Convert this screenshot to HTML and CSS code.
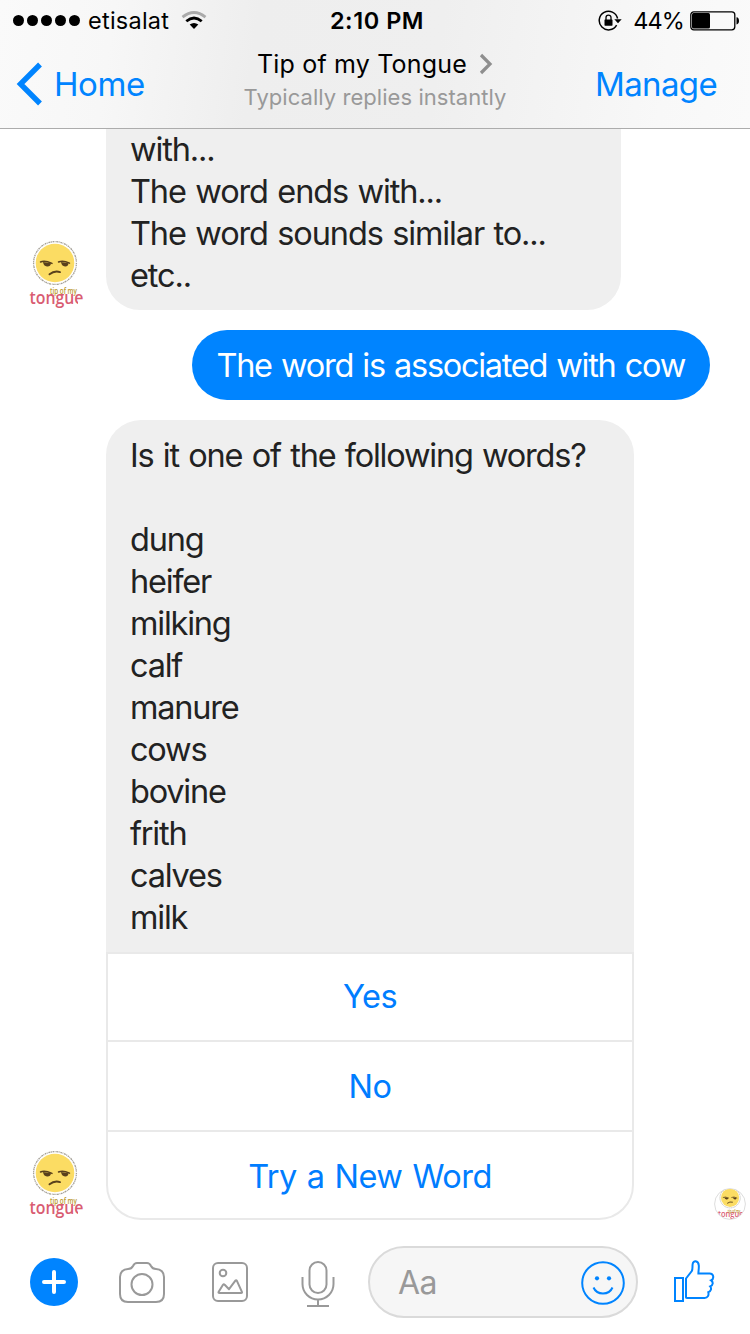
FILE: index.html
```html
<!DOCTYPE html>
<html lang="en">
<head>
<meta charset="utf-8">
<title>Tip of my Tongue</title>
<link rel="stylesheet" href="styles.css">
</head>
<body>
<svg class="defs" width="0" height="0" aria-hidden="true">
  <defs>
    <clipPath id="seenClip"><circle cx="16" cy="17" r="15"/></clipPath>
    <symbol id="logo" viewBox="0 0 60 72">
      <circle cx="27" cy="25" r="21.400" fill="none" stroke="#756f61" stroke-width="1.300" stroke-dasharray="1 .7 1.600 .6 .8 .8 2 .5" stroke-opacity=".65"/>
      <circle cx="27" cy="25" r="19.300" fill="#fbdc63"/>
      <g fill="none" stroke="#59401c" stroke-linecap="round">
        <path d="M12.500 24q4-2.200 11.500 1.400M30.500 24q4.500-2.200 11 1.200" stroke-width="1.500"/>
        <path d="M21.500 36.300q5-4 10.500-2.200" stroke-width="1.900"/>
      </g>
      <path d="M15 24l8 1.300q-.5 3.500-4 3.200-3.500-.3-4-4.500zM33 24l7.500 1.200q-.5 3.500-3.500 3.200-3.500-.3-4-4.400z" fill="#59401c"/>
      <text class="logo-big" x="1.500" y="65.500" textLength="54" lengthAdjust="spacingAndGlyphs">tongue</text>
      <text class="logo-small" x="22" y="56.200" textLength="27" lengthAdjust="spacingAndGlyphs">tip of my</text>
      <path d="M50 62.300h8v6h-8z" fill="#fff"/>
    </symbol>
  </defs>
</svg>
<div class="screen">
  <header class="header">
    <div class="status">
      <div class="status-left">
        <span class="dots"><i></i><i></i><i></i><i></i><i></i></span>
        <span class="carrier">etisalat</span>
        <svg class="wifi" width="26" height="20" viewBox="0 0 26 20" fill="none">
          <path d="M1.500 6.200Q13-3.200 24.500 6.200" stroke="#aaa" stroke-width="2.800"/>
          <path d="M5.300 10.300Q13 3.800 20.700 10.300" stroke="#000" stroke-width="2.800"/>
          <path d="M8.700 13.600Q13 10.200 17.300 13.600L13 18z" fill="#000"/>
        </svg>
      </div>
      <div class="clock">2:10 PM</div>
      <div class="status-right">
        <svg class="lock" width="24" height="22" viewBox="0 0 24 22">
          <path d="M18.600 15.200A9.300 9.300 0 1 1 19.600 8.500" fill="none" stroke="#000" stroke-width="1.500"/>
          <path d="M16.300 9.200h7.400l-3.700 4z"/>
          <rect x="6.500" y="9.500" width="8" height="6.200" rx=".6"/>
          <path d="M8 10V7.600a2.500 2.500 0 0 1 5 0V10" fill="none" stroke="#000" stroke-width="1.300"/>
        </svg>
        <span class="percent">44%</span>
        <svg class="battery" width="50" height="20" viewBox="0 0 50 20">
          <rect x=".8" y=".8" width="44" height="18" rx="3" fill="none" stroke="#000" stroke-width="1.300"/>
          <rect x="2" y="2" width="18" height="15.600" rx="1.500"/>
          <path d="M46.500 6.200q2.500 .3 2.500 3.600t-2.500 3.600z"/>
        </svg>
      </div>
    </div>
    <nav class="nav">
      <a class="back">
        <svg width="28" height="44" viewBox="0 0 28 44" fill="none" stroke="#0084ff" stroke-width="5.400"><path d="M25 2.500L5.500 22l19.500 19.500"/></svg>
        <span>Home</span>
      </a>
      <div class="heading">
        <div class="title"><span>Tip of my Tongue</span>
          <svg width="14" height="22" viewBox="0 0 14 22" fill="none" stroke="#8e8e8e" stroke-width="3.200"><path d="M2 2l9 9-9 9"/></svg>
        </div>
        <div class="subtitle">Typically replies instantly</div>
      </div>
      <a class="manage">Manage</a>
    </nav>
  </header>

  <main class="chat">
    <div class="row received">
      <svg class="avatar" width="60" height="72"><use href="#logo"/></svg>
      <div class="bubble intro">with...<br>The word ends with...<br>The word sounds similar to...<br>etc..</div>
    </div>
    <div class="row sent"><div class="bubble mine">The word is associated with cow</div></div>
    <div class="row received">
      <svg class="avatar" width="60" height="72"><use href="#logo"/></svg>
      <div class="card">
        <div class="card-text">Is it one of the following words?<br><br>dung<br>heifer<br>milking<br>calf<br>manure<br>cows<br>bovine<br>frith<br>calves<br>milk</div>
        <div class="options">
          <a class="option">Yes</a>
          <a class="option">No</a>
          <a class="option">Try a New Word</a>
        </div>
      </div>
      <svg class="seen" width="32" height="34" viewBox="0 0 32 34">
        <circle cx="16" cy="17" r="15.400" fill="#fff" stroke="#ddd"/>
        <g clip-path="url(#seenClip)"><use href="#logo" x="3" y="-1" width="29" height="34"/></g>
      </svg>
    </div>
  </main>

  <footer class="composer">
    <svg class="plus" width="48" height="48" viewBox="0 0 48 48"><circle cx="24" cy="24" r="24" fill="#0084ff"/><path d="M24 14v20M14 24h20" stroke="#fff" stroke-width="4" stroke-linecap="round"/></svg>
    <svg class="camera" width="48" height="42" viewBox="0 0 48 42" fill="none" stroke="#999" stroke-width="2">
      <path d="M10 7c3 0 4-1 5-3 1-2.200 2-3 4-3h10c2 0 3 .8 4 3 1 2 2 3 5 3 5 0 8 3.500 8 8v17c0 5-3 8-8 8H10c-5 0-8-3-8-8V15c0-4.500 3-8 8-8z"/><circle cx="24" cy="22.500" r="10.500"/>
    </svg>
    <svg class="photo" width="36" height="40" viewBox="0 0 36 40" fill="none" stroke="#999" stroke-width="2" stroke-linejoin="round">
      <rect x="1" y="1" width="34" height="38" rx="5"/><circle cx="11" cy="11" r="3.300"/><path d="M7.500 31q-1.500 0-.8-1.300L11 22.800q.8-1 1.700 0l4.300 4.400 6.200-8.400q1-1 1.700 0l5 11q.5 1.200-.8 1.200z"/>
    </svg>
    <svg class="mic" width="34" height="46" viewBox="0 0 34 46" fill="none" stroke="#999" stroke-width="2">
      <rect x="8.500" y="1" width="17" height="31" rx="8.500"/><path d="M1.500 16v7a15.500 15.500 0 0 0 31 0v-7M17 38.500V45M6 45h22"/>
    </svg>
    <div class="field"><span>Aa</span>
      <svg class="smile" width="44" height="44" viewBox="0 0 44 44" fill="none" stroke="#0084ff" stroke-width="2"><circle cx="22" cy="22" r="20.800"/><path d="M12.500 26.500c3.500 8 15.500 8 19 0"/><g fill="#0084ff" stroke="none"><circle cx="16" cy="17.300" r="2.100"/><circle cx="28" cy="17.300" r="2.100"/></g></svg>
    </div>
    <svg class="like" width="42" height="44" viewBox="0 0 42 44" fill="none" stroke="#0084ff" stroke-width="2">
      <path d="M1 18h8v23H1z"/>
      <path d="M12 37.500V18.500L17.800 11c1-2 .5-4 .8-6.500.3-4.500 5.800-4.300 6.200 1 .2 3.200-.4 5.500-.4 8h11.200c4.500 0 4.600 5.500 1.500 6.800 2.500 1.700 2 5.300-.9 6.200 1.600 2 .8 4.900-1.900 5.700.8 3.300-.7 5.800-3.700 5.800H13.500q-1.500 0-1.500-.5z"/>
    </svg>
  </footer>
</div>
</body>
</html>
```

FILE: styles.css
```css
* { box-sizing: border-box; }
body { margin: 0; background: #fff; font-family: Inter, "Noto Sans", sans-serif; }
svg { display: block; flex: none; }
.defs { position: absolute; }
.screen { width: 750px; height: 1334px; display: flex; flex-direction: column; overflow: hidden; }

.header { height: 129px; flex: none; border-bottom: 1px solid #acacac; background: linear-gradient(98deg, #fafafa 0%, #f7f7f7 15%, #eeeeee 34%, #efefef 58%, #f8f8f8 88%, #fafafa 100%); }
.status { height: 40px; display: grid; grid-template-columns: 1fr auto 1fr; align-items: center; color: #000; font-size: 23.500px; line-height: 41px; }
.status-left { display: flex; align-items: center; padding-left: 13px; }
.dots { display: flex; gap: 3px; margin-right: 8px; }
.dots i { width: 11px; height: 11px; border-radius: 50%; background: #000; }
.carrier { width: 81px; letter-spacing: .25px; white-space: nowrap; }
.wifi { margin-left: 12px; margin-top: 1px; }
.clock { font-weight: 600; letter-spacing: .55px; padding-left: 4px; }
.status-right { display: flex; align-items: center; justify-content: flex-end; padding-right: 10px; }
.lock { margin-right: 11px; }
.percent { margin-right: 6px; letter-spacing: -.9px; }

.nav { height: 88px; display: grid; grid-template-columns: 1fr auto 1fr; color: #0084ff; font-size: 33px; }
.back { display: flex; align-items: center; padding-left: 15px; gap: 11px; height: 88px; letter-spacing: -.4px; }
.manage { text-align: right; line-height: 88px; padding-right: 33px; letter-spacing: -.65px; }
.heading { text-align: center; padding-top: 8px; }
.title { display: flex; justify-content: center; align-items: center; gap: 12px; font-size: 25px; line-height: 32px; color: #000; letter-spacing: .18px; }
.subtitle { font-size: 22px; line-height: 32px; color: #999; letter-spacing: .05px; margin-top: 1px; }

.chat { flex: none; height: 1092px; display: flex; flex-direction: column; gap: 20px; overflow: hidden; font-size: 32.500px; line-height: 42px; color: #222; letter-spacing: -1.22px; word-spacing: 1.500px; }
.row { display: flex; flex: none; align-items: flex-end; }
.received { padding-left: 28px; }
.avatar { margin-right: 18px; }
.bubble { white-space: nowrap; }
.intro { width: 515px; height: 181px; padding: 0 24px; background: #efefef; border-radius: 0 0 34px 34px; letter-spacing: -1.13px; }
.sent { justify-content: flex-end; padding-right: 40px; }
.mine { width: 518px; height: 70px; border-radius: 35px; background: #0084ff; color: #fff; padding: 15px 24.500px 13px; letter-spacing: -1.3px; }
.card { width: 528px; }
.card-text { padding: 15px 24px 13px 24px; height: 532px; border-radius: 35px 35px 0 0; background: #efefef; white-space: nowrap; }
.options { border: 2px solid #e9e9e9; border-radius: 0 0 35px 35px; background: #fff; }
.option { display: block; height: 90px; border-top: 2px solid #e9e9e9; line-height: 90px; text-align: center; color: #007dff; letter-spacing: -.55px; }
.option:first-child { height: 86px; line-height: 86px; border-top: 0; }
.option:last-child { height: 88px; }
.seen { margin-left: 80px; margin-bottom: -1px; }

.composer { flex: none; height: 113px; display: flex; align-items: center; padding: 9px 34px 0 30px; }
.camera { margin-left: 40px; margin-top: 2px; }
.photo { margin-left: 46px; }
.mic { margin-left: 53px; margin-top: 3px; }
.field { flex: none; width: 270px; height: 72px; margin-left: 33px; border: 2px solid #dadada; border-radius: 36px; background: #f6f6f6; display: flex; align-items: center; justify-content: space-between; padding: 0 11px 0 28px; color: #999; font-size: 32px; letter-spacing: -.7px; }
.smile { margin-top: 2px; }
.like { margin-left: 36px; }

.logo-small { font-family: "Open Sans", sans-serif; font-size: 9.500px; font-weight: 600; fill: #ba982c; letter-spacing: 0; word-spacing: 0; }
.logo-big { font-family: "Open Sans", sans-serif; font-size: 18.500px; font-weight: 600; fill: #d95c72; letter-spacing: 0; }
```
